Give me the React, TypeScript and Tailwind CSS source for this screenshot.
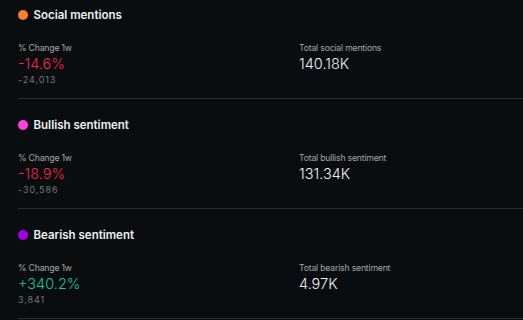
const sections = [
  {
    title: "Social mentions",
    dot: "bg-[#f7812b]",
    change: "-14.6%",
    up: false,
    delta: "-24,013",
    totalLabel: "Total social mentions",
    total: "140.18K",
  },
  {
    title: "Bullish sentiment",
    dot: "bg-[#ff3fe0]",
    change: "-18.9%",
    up: false,
    delta: "-30,586",
    totalLabel: "Total bullish sentiment",
    total: "131.34K",
  },
  {
    title: "Bearish sentiment",
    dot: "bg-[#a400e6]",
    change: "+340.2%",
    up: true,
    delta: "3,841",
    totalLabel: "Total bearish sentiment",
    total: "4.97K",
  },
];

const App: React.FC = () => {
  return (
    <div
      className="w-[523px] h-[320px] overflow-hidden bg-[#0a0d0f] pl-[18px] pt-[7px]"
      style={{ fontFamily: "Inter, 'Liberation Sans', sans-serif" }}
    >
      {sections.map((s, i) => (
        <div key={s.title} className={i > 0 ? "mt-[18px]" : ""}>
          {/* header */}
          <div className="flex items-center h-[16px]">
            <span className={`w-[9.5px] h-[9.5px] rounded-full ${s.dot}`} />
            <span className="ml-[6px] text-[11.5px] leading-[16px] font-semibold text-[#eef0f1]">{s.title}</span>
          </div>
          {/* stats */}
          <div className="flex mt-[19px]">
            <div className="w-[281px]">
              <p className="text-[8.7px] leading-[12px] tracking-[-0.2px] text-[#a3a7a9]">% Change 1w</p>
              <p className={`mt-px text-[14.5px] leading-[18px] font-light ${s.up ? "text-[#22c393]" : "text-[#f3284f]"}`}>{s.change}</p>
              <p className="mt-px text-[9px] leading-[12px] tracking-[0.9px] text-[#71787b]">{s.delta}</p>
            </div>
            <div>
              <p className="text-[8.7px] leading-[12px] tracking-[-0.2px] text-[#a3a7a9]">{s.totalLabel}</p>
              <p className="mt-px text-[14.5px] leading-[18px] font-light text-[#f2f3f4]">{s.total}</p>
            </div>
          </div>
          <div className="mt-[12px] h-px bg-[#2c2f32]" />
        </div>
      ))}
    </div>
  );
};

export default App;
